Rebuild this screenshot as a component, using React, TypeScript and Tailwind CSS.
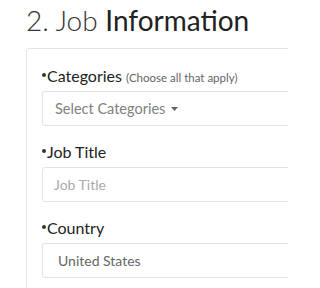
function Dot() {
  return <span className="inline-block w-[4px] h-[4px] rounded-full bg-[#333] mr-[1px] align-[5px]" />
}

export default function App() {
  return (
    <div className="w-[288px] h-[288px] overflow-hidden bg-white font-['Lato','Open_Sans',sans-serif]">
      <h1 className="mt-[5px] pl-[26px] text-[28px] leading-[30px] text-[#333] whitespace-nowrap">
        <span className="font-light">2. Job </span>
        <span className="font-normal text-[#222]">Information</span>
      </h1>
      <div className="mt-[13px] ml-[26px] w-[340px] border border-[#e6e6e6] rounded-[3px] pl-[15px] pt-[17px] pb-6">
        <div className="h-[20px] text-[16px] leading-[20px] text-[#222] whitespace-nowrap">
          <Dot />Categories{" "}
          <span className="text-[11.5px] leading-none text-[#666]">(Choose all that apply)</span>
        </div>
        <div className="mt-[5px] h-[35px] border border-[#e3e3e3] rounded-[3px] flex items-center pl-[12px] text-[14.5px] text-[#808080]">
          Select Categories
          <svg className="ml-[6px] mt-[1px]" width="7" height="4" viewBox="0 0 7 4">
            <path d="M0 0h7L3.5 4z" fill="#666" />
          </svg>
        </div>

        <div className="mt-[16px] h-[20px] text-[16px] leading-[20px] text-[#222] whitespace-nowrap">
          <Dot />Job Title
        </div>
        <div className="mt-[5px] h-[35px] border border-[#e3e3e3] rounded-[3px] flex items-center pl-[11px] text-[14px] text-[#aaa]">
          Job Title
        </div>

        <div className="mt-[16px] h-[20px] text-[16px] leading-[20px] text-[#222] whitespace-nowrap">
          <Dot />Country
        </div>
        <div className="mt-[5px] h-[35px] border border-[#e3e3e3] rounded-[3px] flex items-center pl-[15px] text-[14px] text-[#666]">
          United States
        </div>
      </div>
    </div>
  )
}
